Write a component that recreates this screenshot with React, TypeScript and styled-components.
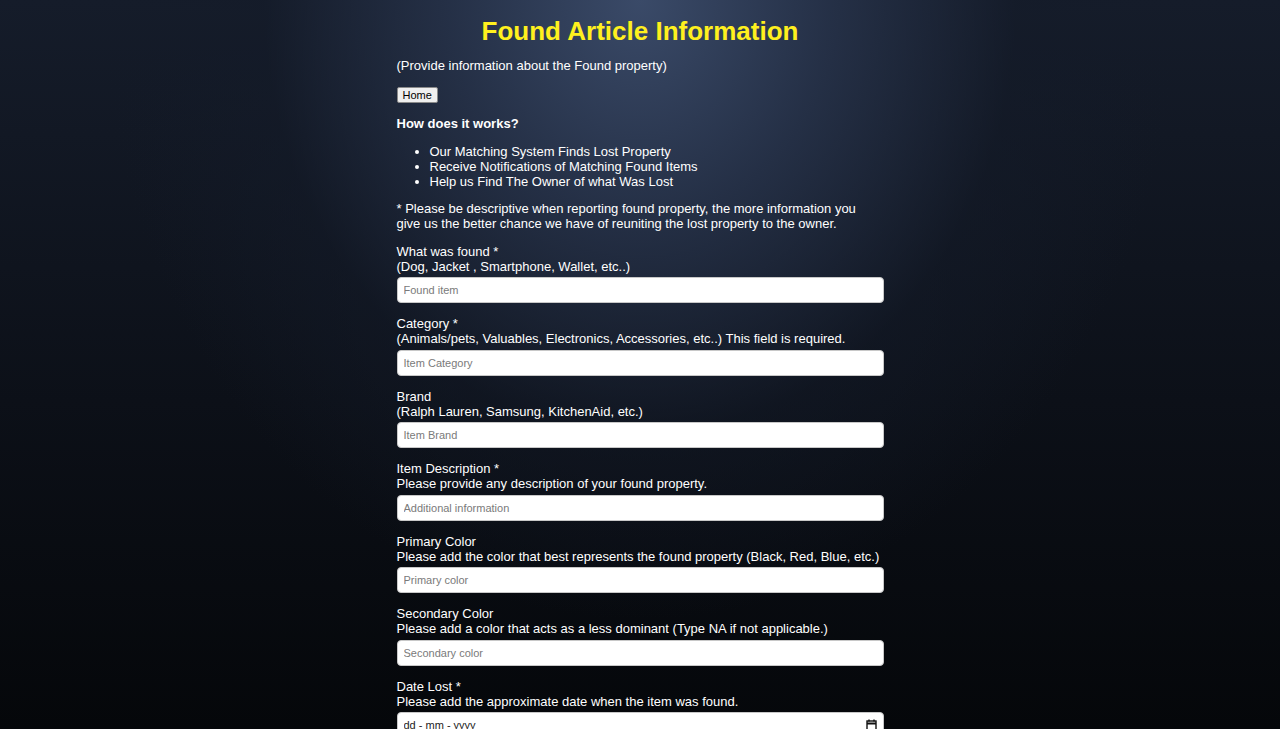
import React from "react";
import styled, { createGlobalStyle } from "styled-components";

const GlobalStyle = createGlobalStyle`
  html, body {
    margin: 0;
    padding: 0;
    min-height: 100%;
  }
  body {
    font-family: "Liberation Sans", Arial, sans-serif;
    color: #ffffff;
    background-color: #06080c;
    background-image:
      radial-gradient(ellipse 42% 85% at 50% 0%, rgba(58, 74, 104, 1) 0%, rgba(40, 52, 76, 0.85) 35%, rgba(20, 27, 41, 0.5) 70%, rgba(10, 13, 20, 0) 100%),
      linear-gradient(180deg, #151c2a 0%, #0c1018 55%, #05070a 100%);
    background-attachment: fixed;
  }
`;

const Page = styled.main`
  width: 487px;
  margin: 0 auto;
  padding: 16px 0 40px;
  font-size: 13px;
`;

const Title = styled.h1`
  margin: 0;
  font-size: 26px;
  line-height: 30px;
  font-weight: 700;
  color: #fff01e;
  text-align: center;
`;

const Subtitle = styled.p`
  margin: 12px 0 14px;
  line-height: 15px;
`;

const HomeButton = styled.button`
  display: block;
  height: 16px;
  padding: 0 5px;
  font-family: "Liberation Sans", Arial, sans-serif;
  font-size: 11px;
  line-height: 14px;
  color: #000;
  background: #efefef;
  border: 1px solid #8a8a8a;
  border-radius: 2px;
`;

const Heading = styled.h3`
  margin: 12.5px 0 13px;
  font-size: 13px;
  line-height: 15px;
  font-weight: 700;
`;

const List = styled.ul`
  margin: 0 0 12px;
  padding-left: 33px;
  line-height: 15px;
`;

const Note = styled.p`
  margin: 0 0 13px;
  line-height: 15px;
`;

const Field = styled.div`
  display: flex;
  flex-direction: column;
  gap: 3.5px;
  margin-bottom: 13px;
`;

const Label = styled.label`
  line-height: 15px;
`;

const InputWrap = styled.div`
  position: relative;
`;

const TextInput = styled.input`
  box-sizing: border-box;
  display: block;
  width: 100%;
  height: 26px;
  padding: 0 6px;
  font-family: "Liberation Sans", Arial, sans-serif;
  font-size: 11px;
  color: #222;
  background: #ffffff;
  border: 1px solid #c8c8c8;
  border-radius: 4px;
  outline: none;

  &::placeholder {
    color: #7a7a7a;
  }
`;

const DateInput = styled(TextInput)`
  &::placeholder {
    color: #222;
  }
`;

const CalendarIcon = styled.svg`
  position: absolute;
  right: 7px;
  top: 7px;
  width: 11px;
  height: 12px;
`;

const fields = [
  { label: "What was found *", hint: "(Dog, Jacket , Smartphone, Wallet, etc..)", ph: "Found item" },
  {
    label: "Category *",
    hint: "(Animals/pets, Valuables, Electronics, Accessories, etc..) This field is required.",
    ph: "Item Category",
  },
  { label: "Brand", hint: "(Ralph Lauren, Samsung, KitchenAid, etc.)", ph: "Item Brand" },
  { label: "Item Description *", hint: "Please provide any description of your found property.", ph: "Additional information" },
  {
    label: "Primary Color",
    hint: "Please add the color that best represents the found property (Black, Red, Blue, etc.)",
    ph: "Primary color",
  },
  {
    label: "Secondary Color",
    hint: "Please add a color that acts as a less dominant (Type NA if not applicable.)",
    ph: "Secondary color",
  },
];

export default function App() {
  return (
    <>
      <GlobalStyle />
      <Page>
        <Title>Found Article Information</Title>
        <Subtitle>(Provide information about the Found property)</Subtitle>
        <HomeButton type="button">Home</HomeButton>
        <Heading>How does it works?</Heading>
        <List>
          <li>Our Matching System Finds Lost Property</li>
          <li>Receive Notifications of Matching Found Items</li>
          <li>Help us Find The Owner of what Was Lost</li>
        </List>
        <Note>
          * Please be descriptive when reporting found property, the more information you
          <br />
          give us the better chance we have of reuniting the lost property to the owner.
        </Note>
        {fields.map((f) => (
          <Field key={f.label}>
            <Label>
              {f.label}
              <br />
              {f.hint}
            </Label>
            <TextInput type="text" placeholder={f.ph} />
          </Field>
        ))}
        <Field>
          <Label>
            Date Lost *
            <br />
            Please add the approximate date when the item was found.
          </Label>
          <InputWrap>
            <DateInput type="text" placeholder="dd - mm - yyyy" />
            <CalendarIcon viewBox="0 0 11 12" fill="none" stroke="#111" strokeWidth="1.4">
              <rect x="1" y="2" width="9" height="9" />
              <line x1="1" y1="4.5" x2="10" y2="4.5" strokeWidth="2" />
              <line x1="3" y1="0.5" x2="3" y2="2.5" />
              <line x1="8" y1="0.5" x2="8" y2="2.5" />
            </CalendarIcon>
          </InputWrap>
        </Field>
      </Page>
    </>
  );
}
